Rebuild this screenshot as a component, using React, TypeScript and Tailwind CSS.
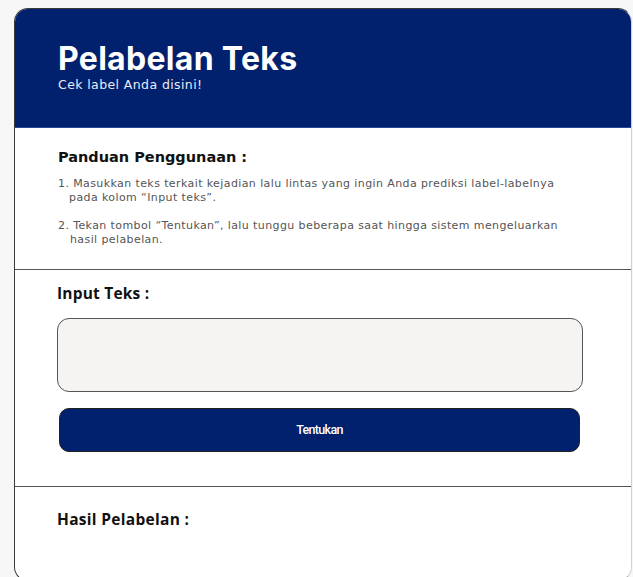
export default function App() {
  return (
    <div className="min-h-screen bg-[#f7f7f7] pt-[8px] pl-[14px] pr-[1px] overflow-hidden">
      <div className="h-[573px] rounded-[14px] border border-[#3a3a3a] border-r-[#d0d0d0] bg-white overflow-hidden">
        {/* Header */}
        <header className="h-[119px] bg-[#01206e] border-b border-[#2a4a9a] px-[43px] pt-[30px] text-white">
          <h1 className="font-['Inter',sans-serif] text-[32px] font-bold leading-[39px] tracking-[0.3px]">Pelabelan Teks</h1>
          <p className="font-['DejaVu_Sans',sans-serif] text-[12.5px] leading-[13px] tracking-[0.4px] text-[#e8ecf6]">Cek label Anda disini!</p>
        </header>

        {/* Guide */}
        <section className="h-[142px] border-b border-[#555] px-[43px] pt-[19px] font-['DejaVu_Sans',sans-serif]">
          <h2 className="text-[14.5px] font-bold leading-[20px] text-[#111]">Panduan Penggunaan :</h2>
          <ol className="mt-[10px] space-y-[14px] text-[11px] leading-[14px] tracking-[0.4px] text-[#555]">
            <li className="pl-[11px] -indent-[11px]">
              1. Masukkan teks terkait kejadian lalu lintas yang ingin Anda prediksi label-labelnya
              <br />
              pada kolom &ldquo;Input teks&rdquo;.
            </li>
            <li className="pl-[12px] -indent-[12px]">
              2. Tekan tombol &ldquo;Tentukan&rdquo;, lalu tunggu beberapa saat hingga sistem mengeluarkan
              <br />
              hasil pelabelan.
            </li>
          </ol>
        </section>

        {/* Input */}
        <section className="h-[217px] border-b border-[#555] px-[42px] pt-[13px]">
          <h2 className="font-['Open_Sans',sans-serif] text-[15.5px] font-bold leading-[20px] tracking-[0.2px] text-[#111]">Input Teks :</h2>
          <textarea className="mt-[15px] block h-[74px] w-[526px] resize-none rounded-[12px] border border-[#555] bg-[#f5f4f2] outline-none" />
          <button className="mt-[16px] ml-[2px] flex h-[44px] w-[521px] items-center justify-center rounded-[10px] border border-[#222] bg-[#01206e] font-['Roboto',sans-serif] text-[12.5px] font-medium tracking-[-0.7px] text-white">
            Tentukan
          </button>
        </section>

        {/* Result */}
        <section className="px-[42px] pt-[22px]">
          <h2 className="font-['Open_Sans',sans-serif] text-[15.5px] font-bold leading-[20px] tracking-[0.3px] text-[#111]">Hasil Pelabelan :</h2>
        </section>
      </div>
    </div>
  );
}
